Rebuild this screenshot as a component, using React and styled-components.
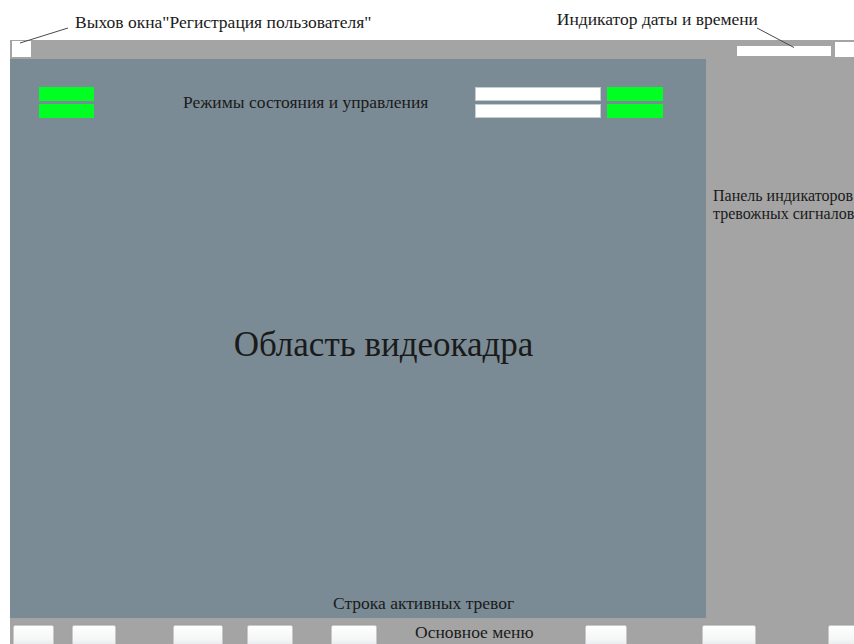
import React from "react";
import styled, { createGlobalStyle } from "styled-components";

const Global = createGlobalStyle`
  html, body {
    margin: 0;
    padding: 0;
    background: #ffffff;
    overflow: hidden;
  }
  body {
    font-family: "Liberation Serif", "DejaVu Serif", "Times New Roman", serif;
    color: #1a1a1a;
  }
`;

const Page = styled.div`
  position: relative;
  width: 854px;
  height: 644px;
  overflow: hidden;
  display: flex;
  flex-direction: column;
`;

const Captions = styled.div`
  height: 40px;
  flex: none;
  display: flex;
  justify-content: space-between;
  padding: 0 96px 0 75px;
  box-sizing: border-box;
`;

const Caption = styled.div`
  font-size: 17.5px;
  line-height: 21px;
  padding-top: ${(p) => p.$top}px;
  white-space: nowrap;
`;

const Leaders = styled.svg`
  position: absolute;
  left: 0;
  top: 0;
  pointer-events: none;
`;

const Screen = styled.div`
  margin-left: 10px;
  flex: 1;
  background: #a4a4a4;
  display: flex;
  flex-direction: column;
  min-height: 0;
`;

const TopStrip = styled.div`
  height: 19px;
  flex: none;
  display: flex;
  align-items: flex-start;
`;

const ExitBox = styled.div`
  width: 19px;
  height: 16px;
  margin: 1px 0 0 2px;
  background: #ffffff;
`;

const DateField = styled.div`
  width: 94px;
  height: 10px;
  margin: 6px 4px 0 auto;
  background: #ffffff;
`;

const ClockBox = styled.div`
  width: 19px;
  height: 15px;
  margin-top: 2px;
  background: #ffffff;
`;

const Middle = styled.div`
  display: flex;
  height: 559px;
  flex: none;
`;

const Video = styled.div`
  width: 696px;
  background: #7a8b95;
  display: flex;
  flex-direction: column;
`;

const StatusRow = styled.div`
  display: flex;
  align-items: center;
  padding: 28px 43px 0 29px;
`;

const BarStack = styled.div`
  display: flex;
  flex-direction: column;
  gap: 3px;
  margin-left: ${(p) => p.$gap || 0}px;
`;

const Bar = styled.div`
  width: ${(p) => p.$w}px;
  height: 14px;
  box-sizing: border-box;
  background: ${(p) => (p.$field ? "#ffffff" : "#00ff22")};
  border: ${(p) => (p.$field ? "1px solid #c8cdd0" : "none")};
`;

const StatusLabel = styled.div`
  font-size: 17.5px;
  line-height: 21px;
  margin-left: 89px;
  white-space: nowrap;
`;

const Spacer = styled.div`
  margin-left: auto;
`;

const FrameArea = styled.div`
  flex: 1;
  display: flex;
  align-items: center;
  justify-content: center;
  padding: 0 0 22px 51px;
`;

const FrameLabel = styled.div`
  font-size: 35px;
  line-height: 40px;
  white-space: nowrap;
`;

const AlarmLine = styled.div`
  font-size: 17.5px;
  line-height: 21px;
  padding: 0 0 4px 323px;
  white-space: nowrap;
`;

const SidePanel = styled.div`
  flex: 1;
  padding: 128px 0 0 7px;
  font-size: 16px;
  line-height: 18px;
  white-space: nowrap;
  overflow: hidden;
`;

const MenuStrip = styled.div`
  display: flex;
  align-items: flex-start;
  padding-top: 7px;
  height: 26px;
  flex: none;
  box-sizing: border-box;
`;

const MenuButton = styled.div`
  flex: none;
  width: ${(p) => p.$w}px;
  height: 26px;
  margin-left: ${(p) => p.$gap}px;
  box-sizing: border-box;
  border: 1px solid #c9c9c9;
  border-radius: 2px;
  background: linear-gradient(#ffffff 0%, #f4f6f7 55%, #dfe3e5 100%);
  box-shadow: 0 0 1px rgba(0, 0, 0, 0.15);
`;

const MenuLabel = styled.div`
  flex: none;
  width: 208px;
  padding-left: 38px;
  box-sizing: border-box;
  font-size: 17.5px;
  line-height: 21px;
  margin-top: -3px;
  white-space: nowrap;
`;

const leftButtons = [
  { gap: 3, w: 41 },
  { gap: 18, w: 44 },
  { gap: 57, w: 50 },
  { gap: 24, w: 46 },
  { gap: 38, w: 46 },
];

const rightButtons = [
  { gap: 0, w: 42 },
  { gap: 75, w: 54 },
  { gap: 72, w: 40 },
];

export default function App() {
  return (
    <>
      <Global />
      <Page>
        <Captions>
          <Caption $top={12}>Выхов окна"Регистрация пользователя"</Caption>
          <Caption $top={9}>Индикатор даты и времени</Caption>
        </Captions>
        <Screen>
          <TopStrip>
            <ExitBox />
            <DateField />
            <ClockBox />
          </TopStrip>
          <Middle>
            <Video>
              <StatusRow>
                <BarStack>
                  <Bar $w={55} />
                  <Bar $w={55} />
                </BarStack>
                <StatusLabel>Режимы состояния и управления</StatusLabel>
                <Spacer />
                <BarStack>
                  <Bar $w={126} $field />
                  <Bar $w={126} $field />
                </BarStack>
                <BarStack $gap={6}>
                  <Bar $w={56} />
                  <Bar $w={56} />
                </BarStack>
              </StatusRow>
              <FrameArea>
                <FrameLabel>Область видеокадра</FrameLabel>
              </FrameArea>
              <AlarmLine>Строка активных тревог</AlarmLine>
            </Video>
            <SidePanel>
              Панель индикаторов
              <br />
              тревожных сигналов
            </SidePanel>
          </Middle>
          <MenuStrip>
            {leftButtons.map((b, i) => (
              <MenuButton key={`l${i}`} $gap={b.gap} $w={b.w} />
            ))}
            <MenuLabel>Основное меню</MenuLabel>
            {rightButtons.map((b, i) => (
              <MenuButton key={`r${i}`} $gap={b.gap} $w={b.w} />
            ))}
          </MenuStrip>
        </Screen>
        <Leaders width="854" height="60" viewBox="0 0 854 60">
          <line x1="68" y1="28" x2="20" y2="43" stroke="#4a4a4a" strokeWidth="1" />
          <line x1="757" y1="28" x2="794" y2="47.5" stroke="#4a4a4a" strokeWidth="1" />
        </Leaders>
      </Page>
    </>
  );
}
